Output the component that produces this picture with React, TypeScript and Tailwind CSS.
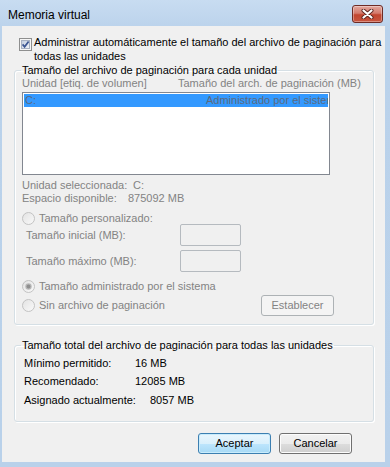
import React from "react";

const gray = "text-[#838383]";

const CheckBox = () => (
  <svg width="13" height="13" viewBox="0 0 13 13" className="shrink-0">
    <defs>
      <linearGradient id="cbfill" x1="0" y1="0" x2="1" y2="1">
        <stop offset="0" stopColor="#bfcbde" />
        <stop offset="1" stopColor="#f3f5f9" />
      </linearGradient>
    </defs>
    <rect x="0.5" y="0.5" width="12" height="12" fill="#f6f6f6" stroke="#8e8f8f" />
    <rect x="2.5" y="2.5" width="8" height="8" fill="url(#cbfill)" stroke="#a7b1c2" />
    <path d="M3.6 6.4 L5.6 8.8 L9.6 3.4" fill="none" stroke="#3b5592" strokeWidth="1.7" />
  </svg>
);

const Radio = ({ checked = false }: { checked?: boolean }) => (
  <svg width="13" height="13" viewBox="0 0 13 13" className="shrink-0">
    <defs>
      <linearGradient id="rfill" x1="0" y1="0" x2="1" y2="1">
        <stop offset="0" stopColor="#e2e2e2" />
        <stop offset="1" stopColor="#fafafa" />
      </linearGradient>
    </defs>
    <circle cx="6.5" cy="6.5" r="6" fill="url(#rfill)" stroke="#c2c2c2" />
    {checked && (
      <>
        <circle cx="6.5" cy="6.5" r="3.2" fill="#b9b9b9" />
        <circle cx="6.5" cy="6.5" r="2" fill="#8f8f8f" />
      </>
    )}
  </svg>
);

const TextBox = () => (
  <div className="w-[61px] h-[22px] border border-[#b5babf] rounded-[2px] bg-[#f0f0f0]" />
);

export default function App() {
  return (
    <div className="w-[390px] h-[467px] flex flex-col bg-[linear-gradient(to_bottom,#c8dcf1_0px,#bad2eb_30px,#b9d1ea_100%)] font-['Liberation_Sans',Arial,sans-serif] text-[11px] text-black">
      {/* title bar */}
      <div className="h-[26px] shrink-0 flex items-start">
        <span className="ml-[8px] mt-[8px] text-[12px] leading-[14px]">Memoria virtual</span>
        <button className="ml-auto mt-[5px] mr-[7px] w-[31px] h-[18px] rounded-[3px] border border-[#6e2b25] bg-[linear-gradient(to_bottom,#e3a89e_0%,#d47a6c_45%,#c2452f_55%,#c8553f_100%)] shadow-[inset_0_0_0_1px_rgba(255,255,255,0.35)] flex items-center justify-center">
          <svg width="13" height="10" viewBox="0 0 13 10">
            <path d="M2.5 1.5 L10.5 8.5 M10.5 1.5 L2.5 8.5" stroke="#5a231d" strokeWidth="4" strokeLinecap="round" />
            <path d="M2.5 1.5 L10.5 8.5 M10.5 1.5 L2.5 8.5" stroke="#ffffff" strokeWidth="2.2" strokeLinecap="round" />
          </svg>
        </button>
      </div>

      {/* client area */}
      <div className="ml-[2px] mr-[5px] mb-[5px] flex-1 bg-[#f0f0f0] flex flex-col">
        <div className="mt-[9px] ml-[17px] flex items-start gap-[2px]">
          <div className="mt-[3px]">
            <CheckBox />
          </div>
          <p className="leading-[14px] whitespace-nowrap">
            Administrar automáticamente el tamaño del archivo de paginación para
            <br />
            todas las unidades
          </p>
        </div>

        {/* paging file per drive */}
        <fieldset className="mt-[1px] ml-[12px] w-[360px] border border-[#d5dfe5] rounded-[3px] shadow-[inset_1px_1px_0_#fff,1px_1px_0_#fff] pb-[8px]">
          <legend className="ml-[6px] px-[1px] leading-[13px]">
            Tamaño del archivo de paginación para cada unidad
          </legend>
          <div className={`flex pl-[7px] leading-[13px] ${gray}`}>
            <span className="w-[156px]">Unidad [etiq. de volumen]</span>
            <span>Tamaño del arch. de paginación (MB)</span>
          </div>
          <div className="mt-[2px] ml-[7px] w-[308px] h-[83px] border border-[#828790] bg-white p-[1px]">
            <div className="h-[13px] bg-[#3399ff] flex overflow-hidden leading-[13px] text-[#5d6a7d] whitespace-nowrap">
              <span className="w-[182px] shrink-0 pl-[1px]">C:</span>
              <span>Administrado por el sistema</span>
            </div>
          </div>

          <div className={`mt-[4px] pl-[7px] leading-[13px] ${gray}`}>
            <div className="flex">
              <span className="w-[111px]">Unidad seleccionada:</span>
              <span>C:</span>
            </div>
            <div className="flex">
              <span className="w-[106px]">Espacio disponible:</span>
              <span>875092 MB</span>
            </div>
          </div>

          <div className={`mt-[8px] h-[11px] pl-[7px] flex items-center gap-[4px] ${gray}`}>
            <Radio />
            <span className="leading-[13px]">Tamaño personalizado:</span>
          </div>
          <div className={`h-[22px] pl-[11px] flex items-center ${gray}`}>
            <span className="w-[154px]">Tamaño inicial (MB):</span>
            <TextBox />
          </div>
          <div className={`mt-[4px] h-[22px] pl-[11px] flex items-center ${gray}`}>
            <span className="w-[154px]">Tamaño máximo (MB):</span>
            <TextBox />
          </div>
          <div className={`mt-[8px] h-[13px] pl-[7px] flex items-center gap-[4px] ${gray}`}>
            <Radio checked />
            <span>Tamaño administrado por el sistema</span>
          </div>
          <div className={`mt-[2px] h-[21px] pl-[7px] flex items-center ${gray}`}>
            <Radio />
            <span className="ml-[4px]">Sin archivo de paginación</span>
            <button className={`ml-auto mr-[39px] w-[73px] h-[21px] border border-[#adb2b5] rounded-[3px] bg-[#f4f4f4] ${gray}`}>
              Establecer
            </button>
          </div>
        </fieldset>

        {/* totals */}
        <fieldset className="mt-[14px] ml-[12px] w-[360px] border border-[#d5dfe5] rounded-[3px] shadow-[inset_1px_1px_0_#fff,1px_1px_0_#fff] pb-[14px]">
          <legend className="ml-[6px] px-[1px] leading-[13px]">
            Tamaño total del archivo de paginación para todas las unidades
          </legend>
          <div className="mt-[5px] pl-[9px] flex leading-[13px]">
            <span className="w-[111px]">Mínimo permitido:</span>
            <span>16 MB</span>
          </div>
          <div className="mt-[5px] pl-[9px] flex leading-[13px]">
            <span className="w-[111px]">Recomendado:</span>
            <span>12085 MB</span>
          </div>
          <div className="mt-[6px] pl-[9px] flex leading-[13px]">
            <span className="w-[126px]">Asignado actualmente:</span>
            <span>8057 MB</span>
          </div>
        </fieldset>

        <div className="mt-[11px] pr-[33px] flex justify-end gap-[8px]">
          <button className="w-[73px] h-[21px] rounded-[3px] border border-[#3c7fb1] bg-[linear-gradient(to_bottom,#eaf6fd_0%,#d9f0fc_50%,#bee6fd_50%,#a7d9f5_100%)] shadow-[inset_0_0_0_1px_#c9ecfc]">
            Aceptar
          </button>
          <button className="w-[73px] h-[21px] rounded-[3px] border border-[#707070] bg-[linear-gradient(to_bottom,#f2f2f2_0%,#ebebeb_50%,#dddddd_50%,#cfcfcf_100%)] shadow-[inset_0_0_0_1px_#fcfcfc]">
            Cancelar
          </button>
        </div>
      </div>
    </div>
  );
}
